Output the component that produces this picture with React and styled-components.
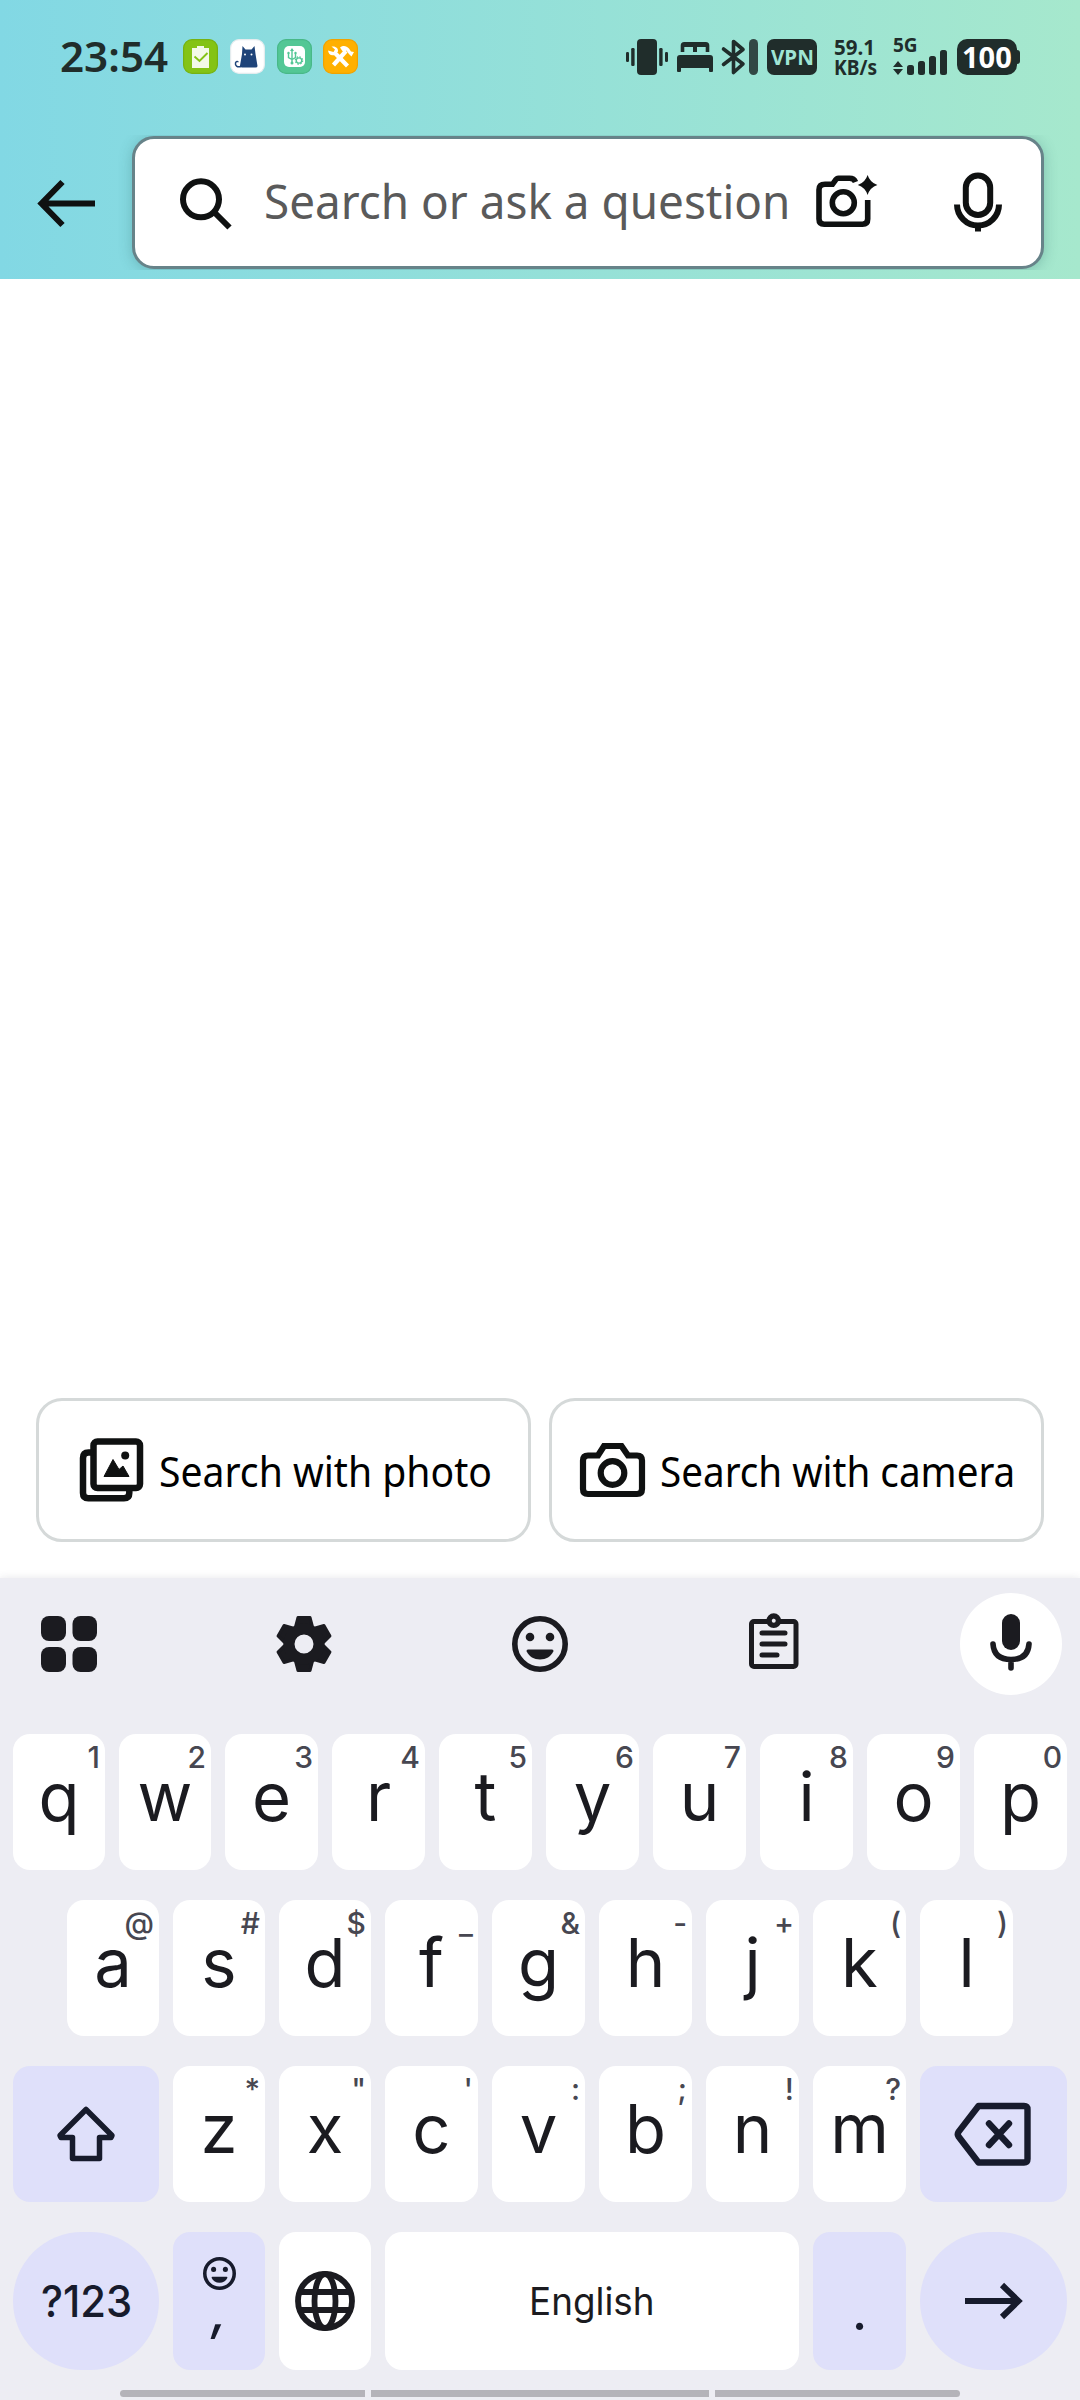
import React, { useLayoutEffect, useRef } from "react";
import styled, { createGlobalStyle, css } from "styled-components";

const GlobalStyle = createGlobalStyle`
  * { box-sizing: border-box; }
  html, body { margin: 0; padding: 0; background: #fff; }
  body { width: 1080px; height: 2400px; overflow: hidden; }
`;

const UI = '"Noto Sans", "Open Sans", sans-serif';
const KEYS = 'Inter, Roboto, sans-serif';
const STATUS_INK = "#202d2b";
const KEY_INK = "#1b1b20";
const ACCENT_INK = "#171b2c";

const Screen = styled.div`
  width: 1080px;
  height: 2400px;
  display: flex;
  flex-direction: column;
  background: #fff;
  overflow: hidden;
`;

/* Text that is squeezed or stretched to a fixed measure */
const FitBox = styled.span`
  display: flex;
  flex: none;
  width: ${(p) => p.$w}px;
  justify-content: flex-start;
`;
const FitInner = styled.span`
  flex: none;
  white-space: pre;
  transform-origin: left center;
`;
function Fit({ w, children }) {
  const ref = useRef(null);
  useLayoutEffect(() => {
    const el = ref.current;
    el.style.transform = `scaleX(${w / el.offsetWidth})`;
  }, [w, children]);
  return (
    <FitBox $w={w}>
      <FitInner ref={ref}>{children}</FitInner>
    </FitBox>
  );
}

const Icon = styled.svg`
  display: block;
  flex: none;
  overflow: visible;
`;

/* ---------- header ---------- */
const Header = styled.header`
  height: 279px;
  flex: none;
  display: flex;
  flex-direction: column;
  background: linear-gradient(to right, #82d8e4, #a6e8cd);
`;
const StatusBar = styled.div`
  height: 113px;
  padding: 0 60px 0 60px;
  display: flex;
  align-items: center;
  justify-content: space-between;
  font-family: ${UI};
  color: ${STATUS_INK};
`;
const StatusSide = styled.div`
  display: flex;
  align-items: center;
`;
const Clock = styled.div`
  font-size: 41px;
  line-height: 48px;
  padding-bottom: 2px;
  font-weight: 600;
  margin-right: 15px;
`;
const AppBadges = styled.div`
  display: flex;
  gap: 11.8px;
`;
const VpnTag = styled.div`
  width: 50px;
  height: 36px;
  margin-left: 9px;
  border-radius: 7px;
  background: ${STATUS_INK};
  color: #9fe5d5;
  font-weight: 700;
  font-size: 22px;
  line-height: 34px;
  display: flex;
  justify-content: center;
`;
const Speed = styled.div`
  margin-left: 17px;
  display: flex;
  flex-direction: column;
  font-weight: 700;
  font-size: 20.5px;
  line-height: 20px;
  width: 43px;
`;
const Signal = styled.div`
  margin-left: 16px;
  width: 55px;
  height: 37px;
  display: flex;
  flex-direction: column;
  justify-content: space-between;
  font-weight: 700;
  font-size: 19px;
  line-height: 14px;
  position: relative;
`;
const SignalIcon = styled(Icon)`
  position: absolute;
  left: 0;
  bottom: 0;
`;
const Battery = styled.div`
  margin-left: 9px;
  width: 60px;
  height: 36px;
  border-radius: 10px;
  background: ${STATUS_INK};
  color: #fff;
  font-weight: 700;
  font-size: 29px;
  line-height: 35px;
  display: flex;
  justify-content: center;
`;
const BatteryTip = styled.div`
  width: 3px;
  height: 14px;
  background: ${STATUS_INK};
  border-radius: 0 3px 3px 0;
`;

const SearchRow = styled.div`
  display: flex;
  align-items: center;
  padding: 23px 36px 0 36px;
`;
const BackButton = styled.div`
  width: 96px;
  flex: none;
  padding-top: 1px;
`;
const SearchBox = styled.div`
  width: 912px;
  height: 133px;
  border: 3px solid #678389;
  border-radius: 22px;
  background: #fff;
  box-shadow: 0 2px 14px rgba(40, 100, 100, 0.3);
  display: flex;
  align-items: center;
  padding-left: 45px;
  clip-path: inset(-1px -20px -1px -20px);
`;
const Placeholder = styled.div`
  font-family: ${UI};
  font-size: 48px;
  line-height: 60px;
  padding-bottom: 4px;
  color: #5a5a5a;
  margin: 0 25px 0 31.5px;
`;

/* ---------- content ---------- */
const Content = styled.main`
  flex: 1;
  display: flex;
  flex-direction: column;
  justify-content: flex-end;
  padding: 0 36px 36px;
`;
const ChipRow = styled.div`
  display: grid;
  grid-template-columns: 1fr 1fr;
  gap: 18px;
`;
const Chip = styled.div`
  height: 144px;
  border: 3px solid #d5d9d9;
  border-radius: 26px;
  display: flex;
  align-items: center;
  padding-left: ${(p) => p.$pad}px;
  gap: 15px;
`;
const ChipLabel = styled.span`
  font-family: ${UI};
  font-size: 41px;
  line-height: 56px;
  padding-top: 2px;
  color: #000;
`;

/* ---------- keyboard ---------- */
const Keyboard = styled.section`
  flex: none;
  height: 822px;
  background: #ededf3;
  box-shadow: 0 0 8px rgba(60, 60, 70, 0.12);
  display: flex;
  flex-direction: column;
  font-family: ${KEYS};
  color: ${KEY_INK};
`;
const Toolbar = styled.div`
  height: 156px;
  padding: 15px 18px 0;
  display: grid;
  grid-template-columns: 102px 102px 102px 102px 102px;
  column-gap: 133.400px;
`;
const Tool = styled.div`
  width: 102px;
  height: 102px;
  border-radius: 50%;
  display: flex;
  align-items: center;
  justify-content: center;
  background: ${(p) => (p.$raised ? "#fff" : "transparent")};
`;
const Rows = styled.div`
  display: flex;
  flex-direction: column;
  gap: 30px;
`;
const KeyRow = styled.div`
  display: grid;
  gap: 14px;
  padding: 0 ${(p) => p.$side || 13}px;
  grid-template-columns: ${(p) => p.$cols};
`;
const Key = styled.div`
  position: relative;
  height: ${(p) => p.$h || 136}px;
  border-radius: ${(p) => (p.$round ? 70 : 17)}px;
  background: ${(p) => (p.$accent ? "#dfe0fa" : "#fff")};
  color: ${(p) => (p.$accent ? ACCENT_INK : KEY_INK)};
  display: flex;
  flex-direction: column;
  align-items: center;
  ${(p) => p.$center && css`justify-content: center;`}
`;
const Letter = styled.span`
  font-size: 67px;
  line-height: 125px;
`;
const Hint = styled.span`
  position: absolute;
  top: 5px;
  right: 5px;
  font-size: 30px;
  line-height: 36px;
  font-weight: 500;
  color: #474751;
`;
const ModeLabel = styled.span`
  font-size: 44px;
  line-height: 50px;
  font-weight: 500;
`;
const SpaceLabel = styled.span`
  font-size: 38px;
  line-height: 50px;
`;
const Comma = styled.span`
  font-size: 52px;
  line-height: 56px;
  font-style: italic;
  font-weight: 500;
  margin-top: -7px;
`;
const Period = styled.span`
  font-size: 50px;
  line-height: 60px;
  font-weight: 500;
  margin-top: 50px;
`;
const EmojiSlot = styled.div`
  margin-top: 25px;
  height: 34px;
`;

const NavBar = styled.div`
  display: grid;
  grid-template-columns: 245px 338px 245px;
  gap: 6px;
  padding: 20px 120px 0;
`;
const NavPiece = styled.div`
  height: 7px;
  background: #b4b3b9;
  border-radius: ${(p) => p.$radius || "0"};
`;

/* ---------- drawings ---------- */
const Tile = ({ fill, stroke, children }) => (
  <Icon width="35" height="35" viewBox="0 0 35 35">
    <rect x="0.6" y="0.6" width="33.8" height="33.8" rx="8.5" fill={fill} stroke={stroke} strokeWidth="1.2" />
    {children}
  </Icon>
);

const Smile = ({ size, sw }) => (
  <Icon width={size} height={size} viewBox="0 0 56 56">
    <circle cx="28" cy="28" r={28 - sw / 2} fill="none" stroke="currentColor" strokeWidth={sw} />
    <circle cx="18" cy="21" r="4.3" fill="currentColor" />
    <circle cx="38" cy="21" r="4.3" fill="currentColor" />
    <path d="M16 33.5h24a1.5 1.5 0 0 1 1.300 2C39 40.500 34 43.500 28 43.500S17 40.500 14.700 35.500a1.500 1.500 0 0 1 1.300-2z" fill="currentColor" />
  </Icon>
);

const tooth = "M-6-26.500H6L8.500-17H-8.500Z";

const row1 = [["q", "1"], ["w", "2"], ["e", "3"], ["r", "4"], ["t", "5"], ["y", "6"], ["u", "7"], ["i", "8"], ["o", "9"], ["p", "0"]];
const row2 = [["a", "@"], ["s", "#"], ["d", "$"], ["f", "_"], ["g", "&"], ["h", "-"], ["j", "+"], ["k", "("], ["l", ")"]];
const row3 = [["z", "*"], ["x", '"'], ["c", "'"], ["v", ":"], ["b", ";"], ["n", "!"], ["m", "?"]];

const LetterKey = ({ pair }) => (
  <Key>
    <Letter>{pair[0]}</Letter>
    <Hint>{pair[1]}</Hint>
  </Key>
);

export default function App() {
  return (
    <Screen>
      <GlobalStyle />
      <Header>
        <StatusBar>
          <StatusSide>
            <Clock><Fit w={108}>23:54</Fit></Clock>
            <AppBadges>
              <Tile fill="#84c315" stroke="#76b212">
                <path d="M9 9h5V7h7v2h5v20H9z" fill="#f3f9e8" />
                <path d="M11.500 17.500l5 4.500 8-8" fill="none" stroke="#84c315" strokeWidth="1.900" />
              </Tile>
              <Tile fill="#fff" stroke="#e4ecee">
                <path d="M12.500 7l3 3.500h6L24.500 7l1 8 2 12q0 1.500-2 1.500H12q-2.500 0-2-2L12 15z" fill="#1f4479" />
                <path d="M11 27.500c-4 1-6-1-5.500-3.500.4-2 2.500-2 2.500-.8" fill="none" stroke="#1f4479" strokeWidth="1.500" />
                <circle cx="15" cy="15.500" r="1" fill="#fff" />
                <circle cx="21.500" cy="15.500" r="1" fill="#fff" />
              </Tile>
              <Tile fill="#53c795" stroke="#48b888">
                <rect x="7" y="7" width="21" height="21" rx="5" fill="#fff" />
                <path d="M15 10v14.500M11.500 14v4.500l3.500 2 3.500-2V14" fill="none" stroke="#53c795" strokeWidth="1.400" />
                <path d="M15 9l-2 3h4z" fill="#53c795" />
                <circle cx="15" cy="24" r="1.500" fill="#53c795" />
                <circle cx="11.500" cy="14" r="1.200" fill="#53c795" />
                <circle cx="18.500" cy="14" r="1.200" fill="#53c795" />
                <circle cx="22" cy="21.500" r="2.700" fill="none" stroke="#53c795" strokeWidth="1.300" />
                <circle cx="22" cy="21.500" r="3.700" fill="none" stroke="#53c795" strokeWidth="1.200" strokeDasharray="1.500 1.400" />
              </Tile>
              <Tile fill="#ffb000" stroke="#f0a300">
                <path d="M10.500 26L23 12M11 13L24.500 27" fill="none" stroke="#fff" strokeWidth="4.200" />
                <path d="M8.500 7.500l3.500 3-1.500 2.500L5 11.500c.3 3 2.500 5.500 6 4.700l4-3.700c.5-3-2-5.700-6.500-5z" fill="#fff" />
                <path d="M17 8.500c3.500-2.500 6.500-1.500 9 1l2 3 3 .5-2.500 4.500-3-3-2-3-2.500 2-2-2z" fill="#fff" />
              </Tile>
            </AppBadges>
          </StatusSide>
          <StatusSide>
            <Icon width="132" height="36" viewBox="0 0 132 36">
              <g fill={STATUS_INK}>
                <rect x="11" y="0" width="20" height="36" rx="4" />
                <rect x="0" y="13" width="3" height="10" rx="1.200" />
                <rect x="5.200" y="9" width="3.400" height="18" rx="1.200" />
                <rect x="33.200" y="9" width="3.400" height="18" rx="1.200" />
                <rect x="39" y="13" width="3" height="10" rx="1.200" />
                <path d="M54.700 13V6.500q0-3.500 3.500-3.500H79.800q3.500 0 3.500 3.500V13H79.700V8H71V13H67V8H58.300V13z" />
                <path d="M54 16h30q3 0 3 3v13q0 1-1 1h-2q-1 0-1-1v-3H55v3q0 1-1 1h-2q-1 0-1-1V19q0-3 3-3z" />
                <rect x="123" y="0" width="9" height="36" rx="4.500" opacity="0.85" />
              </g>
              <path d="M97.500 10L117 25l-9.500 8.500v-31L117 10.500 97.500 25.500" fill="none" stroke={STATUS_INK} strokeWidth="3.600" strokeLinejoin="round" strokeLinecap="round" />
            </Icon>
            <VpnTag><Fit w={43}>VPN</Fit></VpnTag>
            <Speed>
              <Fit w={41}>59.1</Fit>
              <Fit w={43}>KB/s</Fit>
            </Speed>
            <Signal>
              <Fit w={25}>5G</Fit>
              <SignalIcon width="55" height="26" viewBox="0 0 55 26">
                <g fill={STATUS_INK}>
                  <path d="M5 12l5 6H0zM0 20h10l-5 6z" />
                  <rect x="14" y="16" width="7" height="10" rx="2.500" />
                  <rect x="25" y="12" width="7" height="14" rx="2.500" />
                  <rect x="36" y="7" width="7" height="19" rx="2.500" />
                  <rect x="47" y="1" width="7" height="25" rx="2.500" />
                </g>
              </SignalIcon>
            </Signal>
            <Battery><Fit w={50}>100</Fit></Battery>
            <BatteryTip />
          </StatusSide>
        </StatusBar>
        <SearchRow>
          <BackButton>
            <Icon width="60" height="48" viewBox="0 0 60 48" fill="none" stroke="#0f1111" strokeWidth="6">
              <path d="M59 24.500H6M26.500 3L5.500 24.500l21 21.500" />
            </Icon>
          </BackButton>
          <SearchBox>
            <Icon width="52" height="52" viewBox="0 0 52 52" fill="none" stroke="#0f1111" strokeWidth="6">
              <circle cx="21" cy="22.300" r="18" />
              <path d="M34 35l15.500 15.500" />
            </Icon>
            <Placeholder><Fit w={526.5}>Search or ask a question</Fit></Placeholder>
            <Icon width="188" height="60" viewBox="815 172.500 188 60" fill="none" stroke="#0f1111" strokeWidth="5.600">
              <path d="M855.500 181.500q-1.500-3.700-6-3.700h-11q-2 0-3.500 2.500l-2.500 3.500h-7.500q-6 0-6 5.500V218.500q0 5.200 5.200 5.200H862.500q5.200 0 5.200-5.200V199.500" />
              <circle cx="843.300" cy="202.300" r="11" />
              <path d="M867.600 174.500q2.400 7.600 9.800 10-7.400 2.400-9.800 10-2.400-7.600-9.800-10 7.400-2.400 9.800-10z" fill="#0f1111" stroke="none" />
              <rect x="965.800" y="175" width="24.400" height="39.500" rx="12.200" strokeWidth="6" />
              <path d="M957 204a21 21 0 0 0 42 0M978 224v7" strokeWidth="6" />
            </Icon>
          </SearchBox>
        </SearchRow>
      </Header>

      <Content>
        <ChipRow>
          <Chip $pad={39}>
            <Icon width="66" height="66" viewBox="78 1437 66 66" fill="none" stroke="#0f1111" strokeWidth="6.500">
              <rect x="93.500" y="1441.500" width="46.500" height="46.500" rx="4" />
              <path d="M93.500 1452.500H88.500q-5.500 0-5.500 5.500V1493q0 5.300 5.300 5.300H124q5.300 0 5.300-5.300V1488" />
              <path d="M104 1476.500L113 1459.500 119 1469.500 123 1466 129 1476.500z" fill="#0f1111" stroke="#0f1111" strokeWidth="1" />
              <circle cx="125.200" cy="1455.500" r="4" fill="#0f1111" stroke="none" />
            </Icon>
            <ChipLabel><Fit w={333}>Search with photo</Fit></ChipLabel>
          </Chip>
          <Chip $pad={27}>
            <Icon width="66" height="56" viewBox="579 1442 66 56" fill="none" stroke="#0f1111" strokeWidth="6.200">
              <path d="M588 1455.500H598L604 1446H621.500L628 1455.500H637q5 0 5 5V1489q0 5-5 5H588q-5 0-5-5V1460.500q0-5 5-5z" />
              <circle cx="612.500" cy="1473" r="11.800" />
            </Icon>
            <ChipLabel><Fit w={355}>Search with camera</Fit></ChipLabel>
          </Chip>
        </ChipRow>
      </Content>

      <Keyboard>
        <Toolbar>
          <Tool>
            <Icon width="56" height="56" viewBox="0 0 56 56" fill={KEY_INK}>
              <rect width="25" height="25" rx="8" />
              <rect x="31.500" width="24.500" height="25" rx="8" />
              <rect y="31" width="25" height="25" rx="8" />
              <rect x="31.500" y="31" width="24.500" height="25" rx="8" />
            </Icon>
          </Tool>
          <Tool>
            <Icon width="56" height="56" viewBox="-28 -28 56 56" fill={KEY_INK} stroke={KEY_INK} strokeWidth="3" strokeLinejoin="round">
              {[0, 60, 120, 180, 240, 300].map((a) => (
                <path key={a} d={tooth} transform={`rotate(${a})`} />
              ))}
              <circle r="15" fill="none" strokeWidth="11" />
            </Icon>
          </Tool>
          <Tool><Smile size={56} sw={5.6} /></Tool>
          <Tool>
            <Icon width="52" height="56" viewBox="0 0 52 56" fill="none" stroke={KEY_INK} strokeWidth="5">
              <rect x="2.500" y="5.500" width="44.500" height="45" rx="2.500" />
              <path d="M13 17h23M13 28h23M13 39h15" strokeLinecap="round" />
              <circle cx="24.750" cy="4.700" r="4.600" strokeWidth="5.500" />
              <circle cx="24.750" cy="4.700" r="2" fill="#ededf3" stroke="none" />
            </Icon>
          </Tool>
          <Tool $raised>
            <Icon width="42" height="60" viewBox="0 0 42 60" fill="none" stroke={KEY_INK} strokeWidth="5.600" strokeLinecap="round">
              <rect x="12" y="0" width="18" height="36" rx="9" fill={KEY_INK} stroke="none" />
              <path d="M3 30q1 15.500 18 15.500T39 30M21 47v7" />
            </Icon>
          </Tool>
        </Toolbar>
        <Rows>
          <KeyRow $cols="repeat(2, 92px) repeat(8, 93px)">
            {row1.map((p) => <LetterKey key={p[0]} pair={p} />)}
          </KeyRow>
          <KeyRow $cols="repeat(3, 92px) repeat(6, 93px)" $side={67}>
            {row2.map((p) => <LetterKey key={p[0]} pair={p} />)}
          </KeyRow>
          <KeyRow $cols="146px repeat(2, 92px) repeat(5, 93px) 147px">
            <Key $accent $center>
              <Icon width="58" height="56" viewBox="0 0 58 56" fill="none" stroke={ACCENT_INK} strokeWidth="5.500" strokeLinejoin="round">
                <path d="M29 3.500L55 29.500 54 31.500H42.500V52.500H15.500V31.500H4L3 29.500z" />
              </Icon>
            </Key>
            {row3.map((p) => <LetterKey key={p[0]} pair={p} />)}
            <Key $accent $center>
              <Icon width="80" height="64" viewBox="0 0 80 64" fill="none" stroke={ACCENT_INK} strokeWidth="6.400" strokeLinejoin="round" strokeLinecap="round">
                <path d="M24.500 4H70q3.500 0 3.500 3.500V57q0 3.500-3.500 3.500H24.500L4.500 34.500q-1.500-2.300 0-4.600z" />
                <path d="M35 21.500L55 43M55 21.500L35 43" />
              </Icon>
            </Key>
          </KeyRow>
          <KeyRow $cols="146px 92px 92px 414px 93px 147px">
            <Key $accent $round $center $h={138}><ModeLabel><Fit w={91}>?123</Fit></ModeLabel></Key>
            <Key $accent $h={138}>
              <EmojiSlot><Smile size={33} sw={6} /></EmojiSlot>
              <Comma>,</Comma>
            </Key>
            <Key $center $h={138}>
              <Icon width="60" height="60" viewBox="0 0 60 60" fill="none" stroke={KEY_INK} strokeWidth="5.800">
                <circle cx="30" cy="30" r="27" />
                <ellipse cx="30" cy="30" rx="10.500" ry="27" />
                <path d="M4 21h52M4 39h52" />
              </Icon>
            </Key>
            <Key $center $h={138}><SpaceLabel><Fit w={126}>English</Fit></SpaceLabel></Key>
            <Key $accent $h={138}><Period>.</Period></Key>
            <Key $accent $round $center $h={138}>
              <Icon width="58" height="36" viewBox="0 0 58 36" fill="none" stroke={ACCENT_INK} strokeWidth="6">
                <path d="M0 18H54M37 2l16.500 16L37 34" />
              </Icon>
            </Key>
          </KeyRow>
        </Rows>
        <NavBar>
          <NavPiece $radius="4px 0 0 4px" />
          <NavPiece />
          <NavPiece $radius="0 4px 4px 0" />
        </NavBar>
      </Keyboard>
    </Screen>
  );
}
